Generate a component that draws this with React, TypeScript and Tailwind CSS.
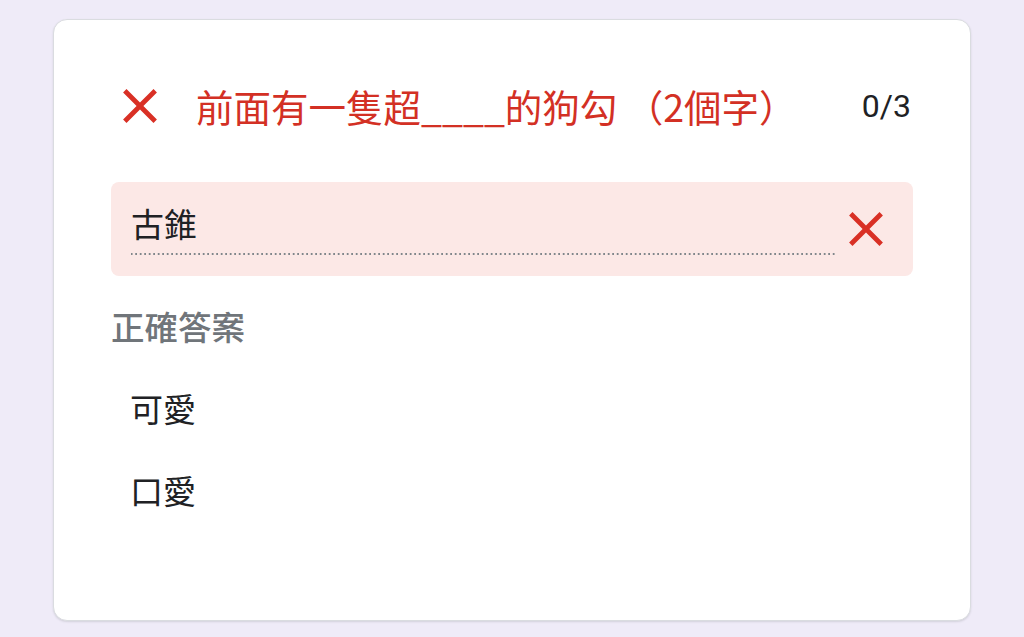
import React from "react";

const cjk = '"Noto Sans CJK TC", "Noto Sans CJK SC", sans-serif';
const latin = 'Roboto, "Noto Sans CJK TC", sans-serif';

function CloseIcon({ className }: { className?: string }) {
  return (
    <svg viewBox="0 0 24 24" className={className} fill="currentColor">
      <path d="M19 6.41 17.59 5 12 10.59 6.41 5 5 6.41 10.59 12 5 17.59 6.41 19 12 13.41 17.59 19 19 17.59 13.41 12z" />
    </svg>
  );
}

const answers = ["可愛", "口愛"];

export default function App() {
  return (
    <div className="min-h-screen bg-[#efebf8] px-[53px] pt-[19px]">
      <div
        className="h-[602px] rounded-[14px] border border-[#dadce0] bg-white px-[57px] pt-[57px] shadow-[0_1px_2px_rgba(60,64,67,0.15)]"
        style={{ fontFamily: cjk }}
      >
        <div className="flex items-center">
          <CloseIcon className="h-[58px] w-[58px] shrink-0 text-[#d93025]" />
          <div className="ml-[27px] flex-1 text-[37.5px] leading-[58px] text-[#d33024]">
            前面有一隻超____的狗勾 （2個字）
          </div>
          <div
            className="mr-[2px] text-[32px] leading-[58px] text-[#202124]"
            style={{ fontFamily: latin }}
          >
            0/3
          </div>
        </div>

        <div className="mt-[47px] flex h-[94px] items-center rounded-[8px] bg-[#fce8e6] pl-[20px] pr-[18px]">
          <div className="flex-1 self-stretch pt-[21px]">
            <div className="bg-[linear-gradient(to_right,#80868b_45%,transparent_0%)] bg-[length:4.5px_2px] bg-bottom bg-repeat-x pb-[12px] text-[33px] leading-[40px] text-[#202124]">
              古錐
            </div>
          </div>
          <CloseIcon className="h-[58px] w-[58px] shrink-0 text-[#d93025]" />
        </div>

        <div className="mt-[28px] text-[33.5px] font-medium leading-[44px] text-[#70757a]">
          正確答案
        </div>

        <div className="mt-[19px] flex flex-col">
          {answers.map((a) => (
            <div
              key={a}
              className="py-[19px] pl-[19px] text-[33px] leading-[44px] text-[#202124]"
            >
              {a}
            </div>
          ))}
        </div>
      </div>
    </div>
  );
}
